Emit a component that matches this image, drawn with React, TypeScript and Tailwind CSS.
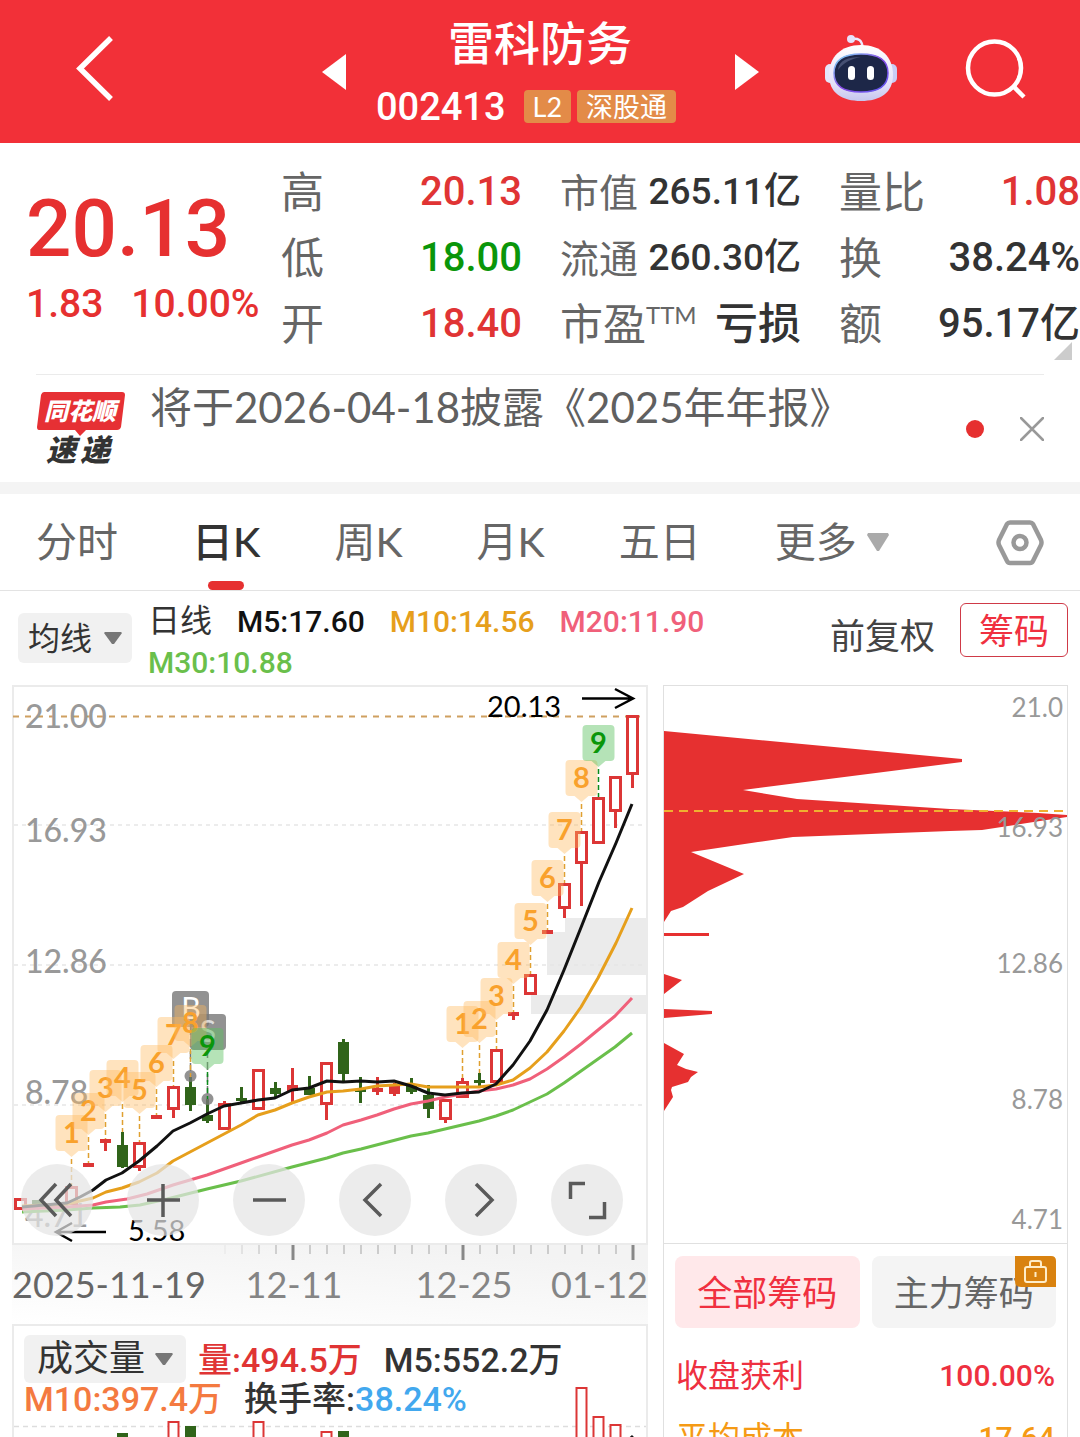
import { ReactNode } from 'react';

const NUM = "font-['Roboto','Noto_Sans_CJK_SC',sans-serif]";

// x of the i-th daily bar
const barX = (i: number) => 20.5 + i * 17;

type Kind = 'up' | 'down' | 'flat';

// [kind, body top, body bottom, high, low]
const CANDLES: [Kind, number, number, number, number][] = [
  ['up', 1198, 1210, 1198, 1210],
  ['down', 1200, 1205, 1200, 1208],
  ['down', 1203, 1207, 1203, 1207],
  ['up', 1186, 1205, 1186, 1205],
  ['flat', 1163, 1167, 1163, 1167],
  ['flat', 1139, 1143, 1139, 1151],
  ['down', 1145, 1167, 1132, 1168],
  ['up', 1142, 1168, 1142, 1171],
  ['flat', 1115, 1119, 1115, 1119],
  ['up', 1086, 1110, 1086, 1118],
  ['down', 1087, 1105, 1077, 1111],
  ['down', 1115, 1121, 1099, 1123],
  ['up', 1103, 1130, 1101, 1130],
  ['down', 1098, 1101, 1087, 1102],
  ['up', 1069, 1110, 1069, 1110],
  ['down', 1088, 1094, 1082, 1097],
  ['flat', 1085, 1091, 1068, 1103],
  ['down', 1088, 1095, 1076, 1095],
  ['up', 1062, 1105, 1062, 1120],
  ['down', 1042, 1074, 1039, 1081],
  ['down', 1089, 1092, 1077, 1103],
  ['flat', 1088, 1092, 1077, 1095],
  ['flat', 1086, 1094, 1083, 1096],
  ['down', 1085, 1092, 1078, 1094],
  ['down', 1095, 1109, 1085, 1118],
  ['up', 1099, 1120, 1099, 1123],
  ['up', 1081, 1098, 1078, 1098],
  ['down', 1080, 1083, 1073, 1086],
  ['up', 1049, 1083, 1049, 1083],
  ['flat', 1012, 1016, 1012, 1020],
  ['up', 974, 995, 974, 995],
  ['flat', 930, 934, 930, 934],
  ['up', 883, 909, 883, 918],
  ['up', 831, 864, 831, 906],
  ['up', 797, 844, 797, 844],
  ['up', 776, 812, 776, 828],
  ['up', 715, 775, 715, 788],
];

const MA_LINES = [
  {
    color: '#6abf4b',
    points:
      '22,1212 67,1210 93,1208 120,1207 140,1205 167,1199 207,1189 241,1181 292,1167 327,1158 343,1153 361,1149 411,1136 428,1133 462,1125 479,1121 496,1116 513,1110 530,1102 547,1094 564,1083 581,1071 598,1059 615,1047 632,1033',
  },
  {
    color: '#f0607a',
    points:
      '22,1209 67,1207 93,1205 106,1202 127,1199 147,1194 173,1185 207,1175 241,1163 258,1157 292,1145 309,1140 327,1133 343,1125 361,1120 377,1115 394,1109 411,1104 428,1101 445,1097 462,1094 479,1091 496,1089 513,1085 530,1079 547,1069 564,1057 581,1044 598,1030 615,1016 632,998',
  },
  {
    color: '#e69f1c',
    points:
      '22,1206 67,1204 93,1198 106,1192 122,1188 139,1182 157,1173 173,1161 190,1152 207,1143 224,1134 241,1125 258,1115 275,1110 292,1103 309,1097 327,1092 343,1091 361,1089 377,1086 394,1085 411,1084 428,1087 462,1087 479,1087 496,1085 513,1080 530,1068 547,1052 564,1031 581,1007 598,978 616,943 632,908',
  },
  {
    color: '#111111',
    points:
      '22,1207 67,1203 80,1197 93,1190 106,1180 122,1173 139,1161 157,1146 173,1131 190,1123 207,1114 224,1106 241,1103 258,1100 275,1098 292,1090 309,1088 327,1081 343,1082 361,1081 377,1082 394,1081 411,1086 428,1093 445,1095 462,1093 479,1092 496,1084 513,1065 530,1041 547,1010 564,970 582,925 599,882 616,843 632,804',
  },
];

// [bar index, label, top of tag]
const TAGS: [number, string, number][] = [
  [3, '1', 1115],
  [4, '2', 1093],
  [5, '3', 1070],
  [6, '4', 1060],
  [7, '5', 1072],
  [8, '6', 1045],
  [9, '7', 1017],
  [10, '8', 1005],
  [11, '9', 1028],
  [26, '1', 1006],
  [27, '2', 1001],
  [28, '3', 978],
  [29, '4', 942],
  [30, '5', 903],
  [31, '6', 860],
  [32, '7', 812],
  [33, '8', 760],
  [34, '9', 725],
];

// [bar index, kind, top of bar]
const VOLUMES: [number, Kind, number][] = [
  [6, 'down', 1433],
  [9, 'up', 1422],
  [10, 'down', 1426],
  [14, 'up', 1422],
  [18, 'up', 1432],
  [19, 'down', 1431],
  [33, 'up', 1388],
  [34, 'up', 1417],
  [35, 'up', 1425],
];

function Header() {
  return (
    <header className="grid h-[143px] grid-cols-[1fr_437px_1fr] items-center bg-[#f23038] text-white">
      <button type="button" aria-label="返回" className="mb-2 ml-[72px] w-12">
        <svg viewBox="72 30 48 76" className="h-[76px] w-12" fill="none">
          <path d="M111 38L80 68.500L111 99" stroke="#fff" strokeWidth="5.500" />
        </svg>
      </button>
      <div className="flex items-center justify-between">
        <button type="button" aria-label="上一只">
          <svg viewBox="0 0 24 36" className="h-9 w-6"><path d="M0 18L24 0V36Z" fill="#fff" /></svg>
        </button>
        <div className="flex flex-col items-center pt-1.5">
          <h1 className="text-[46px] leading-[60px] font-medium">雷科防务</h1>
          <div className="flex items-center gap-1.5 pt-1 pr-7">
            <span className={`${NUM} pr-3 text-[38px] leading-[60px] font-medium`}>002413</span>
            <span className="rounded-sm bg-[#e38b48] px-[9px] text-[27px] leading-[33px]">L2</span>
            <span className="rounded-sm bg-[#e38b48] px-[9px] text-[27px] leading-[33px] whitespace-nowrap">深股通</span>
          </div>
        </div>
        <button type="button" aria-label="下一只">
          <svg viewBox="0 0 24 36" className="h-9 w-6"><path d="M24 18L0 0V36Z" fill="#fff" /></svg>
        </button>
      </div>
      <div className="mb-2 flex items-center justify-end gap-16 pr-[52px]">
        <button type="button" aria-label="智能助手">
          <svg viewBox="824 33 74 70" className="h-[70px] w-[74px]">
            <defs>
              <linearGradient id="shell" x1="0" y1="0" x2="0" y2="1">
                <stop offset="0" stopColor="#fff" />
                <stop offset="0.700" stopColor="#e4e0f8" />
                <stop offset="1" stopColor="#c5c6ee" />
              </linearGradient>
              <linearGradient id="rim" x1="0" y1="0" x2="1" y2="1">
                <stop offset="0" stopColor="#7fe3f5" />
                <stop offset="0.500" stopColor="#8a4be8" />
                <stop offset="1" stopColor="#5e5bf0" />
              </linearGradient>
            </defs>
            <path d="M852 39C858 38 862 40 862.500 47" fill="none" stroke="#eceaff" strokeWidth="2.500" />
            <circle cx="851" cy="39" r="4" fill="#e6e2fb" />
            <rect x="825" y="64" width="10" height="19" rx="5" fill="#e4e6fb" />
            <rect x="887" y="64" width="10" height="19" rx="5" fill="#c9ccf5" />
            <path d="M861 45C881 45 893 57 893 75C893 93 880 101 861 101C842 101 829 93 829 75C829 57 841 45 861 45Z" fill="url(#shell)" />
            <path d="M861 54C878 54 888 59 888 73C888 87 878 92 861 92C844 92 834 87 834 73C834 59 844 54 861 54Z" fill="#1d2748" stroke="url(#rim)" strokeWidth="1.500" />
            <path d="M838 70C839 60 848 57 861 57C851 59 844 62 838 70Z" fill="#465073" />
            <rect x="848" y="66" width="7" height="14" rx="3.500" fill="#fff" />
            <rect x="867" y="66" width="7" height="14" rx="3.500" fill="#fff" />
          </svg>
        </button>
        <button type="button" aria-label="搜索">
          <svg viewBox="962 36 66 68" className="h-[68px] w-[66px]" fill="none" stroke="#fff" strokeWidth="4.500">
            <circle cx="994.500" cy="70" r="26.500" />
            <path d="M1013 88L1024 99" />
          </svg>
        </button>
      </div>
    </header>
  );
}

interface StatProps {
  label: ReactNode;
  tone?: string;
  size?: string;
  labelSize?: string;
  children: ReactNode;
}

function Stat({ label, tone = 'text-[#333]', size = 'text-[40px]', labelSize = 'text-[43px]', children }: StatProps) {
  return (
    <div className="flex h-[66px] items-center justify-between whitespace-nowrap">
      <dt className={`${labelSize} leading-[62px] text-[#666]`}>{label}</dt>
      <dd className={`${NUM} ${size} ${tone} font-medium`}>{children}</dd>
    </div>
  );
}

function Quote() {
  return (
    <section className="relative flex pt-4 pb-[17px]">
      <div className={`${NUM} w-[281px] shrink-0 pt-[22px] pl-[26px] font-medium whitespace-nowrap text-[#e63030]`}>
        <div className="text-[80px] leading-[96px]">20.13</div>
        <div className="flex gap-7 text-[39px] leading-[54px]">
          <span>1.83</span>
          <span>10.00%</span>
        </div>
      </div>
      <dl className="grid flex-1 grid-cols-3 gap-x-[38px]">
        <div>
          <Stat label="高" tone="text-[#e03434]">20.13</Stat>
          <Stat label="低" tone="text-[#0a960a]">18.00</Stat>
          <Stat label="开" tone="text-[#e03434]">18.40</Stat>
        </div>
        <div>
          <Stat label="市值" size="text-[37px]" labelSize="text-[39px]">265.11亿</Stat>
          <Stat label="流通" size="text-[37px]" labelSize="text-[39px]">260.30亿</Stat>
          <Stat label={<>市盈<sup className="-top-4 text-[24px]">TTM</sup></>} size="text-[43px]">亏损</Stat>
        </div>
        <div>
          <Stat label="量比" tone="text-[#e03434]">1.08</Stat>
          <Stat label="换">38.24%</Stat>
          <Stat label="额">95.17亿</Stat>
        </div>
      </dl>
      <svg viewBox="0 0 18 18" className="absolute right-2 bottom-3.5 size-[18px]"><path d="M18 0V18H0Z" fill="#ccc" /></svg>
    </section>
  );
}

function Notice() {
  return (
    <section className="mx-9 flex h-[108px] border-t border-[#ebebeb] text-[#606060]">
      <svg viewBox="36 390 90 90" className="mt-[15px] h-[90px] w-[90px] shrink-0">
        <path d="M44 392H122Q125 392 125 395L121 427Q120 430 117 430H86L80 436L75 430H39Q37 430 37 427L41 395Q42 392 44 392Z" fill="#e63034" />
        <text x="80" y="420" textAnchor="middle" fontSize="24" fontWeight="900" fontStyle="italic" fill="#fff">同花顺</text>
        <g fontSize="30" fontWeight="900" fontStyle="italic" fill="#333">
          <text x="46" y="461">速</text>
          <text x="80" y="461">递</text>
        </g>
      </svg>
      <a href="#notice" className="ml-6 flex-1 pt-1 text-[42px] leading-[56px] whitespace-nowrap">将于2026-04-18披露《2025年年报》</a>
      <div className="flex items-center gap-9">
        <span className="size-[18px] rounded-full bg-[#e63030]" />
        <button type="button" aria-label="关闭">
          <svg viewBox="0 0 24 24" className="size-6" stroke="#999" strokeWidth="2.500" strokeLinecap="round"><path d="M1 1L23 23M23 1L1 23" /></svg>
        </button>
      </div>
    </section>
  );
}

function Tabs() {
  const tabs = ['分时', '日K', '周K', '月K', '五日'];
  return (
    <nav className="flex h-[97px] items-center gap-[74px] border-b border-[#e3e3e3] px-9 text-[41px] whitespace-nowrap text-[#666]">
      {tabs.map(tab => (
        <button
          key={tab}
          type="button"
          className={tab === '日K' ? 'relative h-full font-medium text-[#333]' : 'h-full'}
        >
          {tab}
          {tab === '日K' && <span className="absolute inset-x-0 bottom-0 mx-auto h-[9px] w-9 rounded-full bg-[#e63030]" />}
        </button>
      ))}
      <button type="button" className="flex h-full items-center gap-2.5">
        更多
        <svg viewBox="0 0 22 19" className="h-[19px] w-[22px]"><path d="M1 0H21L22 2L12 18H10L0 2Z" fill="#aaa" /></svg>
      </button>
      <button type="button" aria-label="设置" className="ml-auto">
        <svg viewBox="996 518 48 47" className="h-[47px] w-12" fill="none" stroke="#999" strokeWidth="4.500" strokeLinejoin="round">
          <path d="M1010 521.500H1030Q1032 521.500 1033 523L1041 539Q1042 541.500 1041 544L1033 560Q1032 562 1030 562H1010Q1008 562 1007 560L999 544Q998 541.500 999 539L1007 523Q1008 521.500 1010 521.500Z" />
          <circle cx="1020" cy="541.500" r="6.500" />
        </svg>
      </button>
    </nav>
  );
}

function Caret() {
  return <svg viewBox="0 0 18 13" className="h-[13px] w-[18px]"><path d="M1 0H17L18 1L10 12H8L0 1Z" fill="#777" /></svg>;
}

function IndicatorBar() {
  return (
    <div className="flex h-[94px] items-start pr-3 pl-[18px] whitespace-nowrap">
      <button type="button" className="mt-[22px] flex h-[50px] shrink-0 items-center gap-3 rounded-md bg-[#f1f1f1] px-2.5 text-[32px] text-[#333]">
        均线
        <Caret />
      </button>
      <div className={`${NUM} ml-4 flex flex-1 flex-wrap gap-x-[25px] pt-2.5 text-[30px] leading-[41px] font-medium`}>
        <span className="text-[32px] font-normal text-[#333]">日线</span>
        <span className="text-[#111]">M5:17.60</span>
        <span className="text-[#e69f1c]">M10:14.56</span>
        <span className="text-[#f0607a]">M20:11.90</span>
        <span className="text-[#6abf4b]">M30:10.88</span>
      </div>
      <button type="button" className="mt-[18px] mr-[25px] text-[35px] leading-[52px] text-[#444]">前复权</button>
      <button type="button" className="mt-3 h-[54px] rounded-md border border-[#cf3a48] px-[18px] text-[35px] leading-[52px] text-[#f03040]">筹码</button>
    </div>
  );
}

function Candle({ index }: { index: number }) {
  const [kind, top, bottom, high, low] = CANDLES[index];
  const x = barX(index);
  const color = kind === 'down' ? '#30641a' : '#dc3636';
  return (
    <g>
      <path d={`M${x} ${high}V${top}M${x} ${bottom}V${low}`} stroke={color} strokeWidth="3" />
      {kind === 'up' ? (
        <rect x={x - 5} y={top + 1.5} width="10" height={bottom - top - 3} fill="#fff" stroke={color} strokeWidth="3" />
      ) : (
        <rect x={x - 5.5} y={top} width="11" height={bottom - top} fill={color} />
      )}
    </g>
  );
}

function Tag({ index, label, top }: { index: number; label: string; top: number }) {
  const x = barX(index);
  const green = label === '9';
  return (
    <g>
      <path d={`M${x} ${top + 44}V${CANDLES[index][3]}`} stroke={green ? '#0a8a1a' : '#e0a030'} strokeWidth="1.500" strokeDasharray="5 3" />
      <path
        d={`M${x - 12} ${top}H${x + 12}Q${x + 16} ${top} ${x + 16} ${top + 4}V${top + 32}Q${x + 16} ${top + 36} ${x + 12} ${top + 36}H${x + 7}L${x} ${top + 42}L${x - 7} ${top + 36}H${x - 12}Q${x - 16} ${top + 36} ${x - 16} ${top + 32}V${top + 4}Q${x - 16} ${top} ${x - 12} ${top}Z`}
        fill={green ? '#5cc060' : '#ffb85c'}
        fillOpacity={green ? 0.45 : 0.4}
      />
      <text x={x} y={top + 28} textAnchor="middle" fontSize="29" fontWeight="700" fill={green ? '#0a960a' : '#f9a12c'}>{label}</text>
    </g>
  );
}

function KLineChart() {
  return (
    <svg viewBox="12 685 636 639" className="block h-auto w-full" fill="none">
      <defs>
        <linearGradient id="axis" x1="0" y1="1" x2="0.600" y2="0">
          <stop offset="0" stopColor="#fff" />
          <stop offset="1" stopColor="#f3f3f3" />
        </linearGradient>
      </defs>
      <rect x="12" y="1245" width="636" height="79" fill="url(#axis)" />
      <rect x="13" y="686" width="634" height="558" fill="#fff" stroke="#ebebeb" strokeWidth="2" />
      <path d="M547 932H565V918H647V975H547ZM531 995H647V1014H531Z" fill="#ebebeb" />
      <path d="M14 825H646M14 965H646M14 1105H646" stroke="#e6e6e6" strokeWidth="1.500" strokeDasharray="4 4" />
      <path d="M13 716.500H640" stroke="#cfa060" strokeWidth="2" strokeDasharray="6 6" />
      <g fontSize="32" fill="#999" fontWeight="500">
        <text x="25" y="728">21.00</text>
        <text x="25" y="842">16.93</text>
        <text x="25" y="973">12.86</text>
        <text x="25" y="1104">8.78</text>
        <text x="25" y="1227">4.71</text>
      </g>

      {CANDLES.map((_, i) => <Candle key={i} index={i} />)}
      {MA_LINES.map(line => (
        <polyline key={line.color} points={line.points} stroke={line.color} strokeWidth="3" strokeLinejoin="round" />
      ))}

      <path d="M190.500 1027V1076M207.500 1050V1099" stroke="#777" strokeWidth="1.500" strokeDasharray="8 4" />
      <g fill="#777" fillOpacity="0.800">
        <rect x="172" y="991" width="37" height="36" rx="4" />
        <rect x="190" y="1014" width="36" height="36" rx="4" />
        <circle cx="190.500" cy="1076" r="6" />
        <circle cx="207.500" cy="1099" r="6" />
      </g>
      <g fontSize="30" fill="#fff" textAnchor="middle">
        <text x="191" y="1019">B</text>
        <text x="208" y="1042" fillOpacity="0.700">S</text>
      </g>
      {TAGS.map(([index, label, top]) => <Tag key={index} index={index} label={label} top={top} />)}

      <g fontSize="29" fill="#000">
        <text x="487" y="717">20.13</text>
        <text x="128" y="1241">5.58</text>
      </g>
      <path d="M582 698.500H632M615 689L633 698.500L615 708M106 1232H56M72 1223L56 1232L72 1241" stroke="#000" strokeWidth="2.500" />

      {Array.from({ length: 25 }, (_, i) => {
        const major = i % 10 === 4;
        return (
          <path
            key={i}
            d={major ? `M${225 + i * 17} 1245V1260` : `M${225 + i * 17} 1245V1254`}
            stroke={major ? '#888' : '#ccc'}
            strokeWidth={major ? 3 : 2}
            strokeOpacity={Math.min(1, 0.2 + i * 0.25)}
          />
        );
      })}
      <g fontSize="36" fill="#858585">
        <text x="12" y="1298" fill="#666">2025-11-19</text>
        <text x="294" y="1298" textAnchor="middle">12-11</text>
        <text x="464" y="1298" textAnchor="middle">12-25</text>
        <text x="648" y="1298" textAnchor="end">01-12</text>
      </g>
    </svg>
  );
}

const CONTROLS = [
  { name: '最早', d: 'M35 20L20 36L35 52M50 20L35 36L50 52' },
  { name: '放大', d: 'M20 36H53M36 20V53' },
  { name: '缩小', d: 'M20 36H53' },
  { name: '向左', d: 'M42 20L26 36L42 52' },
  { name: '向右', d: 'M31 20L47 36L31 52' },
  { name: '全屏', d: 'M19.500 35V19.500H34M38 53.500H53.500V38' },
];

function ChartControls() {
  return (
    <div className="absolute inset-x-0 top-[479px] flex justify-between pr-[25px] pl-[9px]">
      {CONTROLS.map(control => (
        <button key={control.name} type="button" aria-label={control.name} className="size-[72px] rounded-full bg-[#e5e5e5]/72">
          <svg viewBox="0 0 72 72" className="size-full" fill="none" stroke="#5a5a5a" strokeWidth="3.500"><path d={control.d} /></svg>
        </button>
      ))}
    </div>
  );
}

function VolumePanel() {
  return (
    <div className="relative h-[200px] border-2 border-[#ebebeb]">
      <svg viewBox="14 1326 632 196" className="absolute inset-x-0 top-0 w-full" fill="none">
        <path d="M14 1426.500H646" stroke="#ddd" strokeWidth="1.500" strokeDasharray="5 4" />
        {VOLUMES.map(([index, kind, top]) =>
          kind === 'up' ? (
            <rect key={index} x={barX(index) - 5} y={top} width="10" height="110" fill="#fff" stroke="#dc3636" strokeWidth="2" />
          ) : (
            <rect key={index} x={barX(index) - 5.5} y={top} width="11" height="110" fill="#30641a" />
          ),
        )}
        <path d="M616 1452L633 1436" stroke="#111" strokeWidth="3" />
      </svg>
      <div className={`${NUM} relative flex flex-wrap gap-x-[22px] pt-[9px] pl-2.5 text-[34px] leading-10 font-medium whitespace-nowrap text-[#333]`}>
        <div className="flex gap-3">
          <button type="button" className="flex h-12 items-center gap-2.5 rounded-md bg-[#f1f1f1] px-[13px] text-[36px] leading-[52px] font-normal">
            成交量
            <Caret />
          </button>
          <span className="leading-[50px] text-[#e03434]">量:494.5万</span>
        </div>
        <span className="leading-[50px]">M5:552.2万</span>
        <div className="-mt-1.5 flex w-full gap-[22px]">
          <span className="text-[#f47a40]">M10:397.4万</span>
          <span>换手率:<span className="text-[#42a8ee]">38.24%</span></span>
        </div>
      </div>
    </div>
  );
}

function ChipPanel() {
  return (
    <aside className="h-[900px] border border-[#e0e0e0]">
      <svg viewBox="664 686 403 557" className="block h-auto w-full border-b border-[#e0e0e0]">
        <g fill="#e63030">
          <path d="M664 731L962 759V762L743 790L797 799L950 809L1038 813L1067 815V817L1040 821L982 830L950 831L793 837L758 842L691 852L744 874L708 891L683 907L671 911L664 922Z" />
          <rect x="664" y="933" width="45" height="3" />
          <path d="M664 974L682 980L664 994ZM664 1009L712 1011V1014L664 1018Z" />
          <path d="M664 1043L684 1054L677 1065L686 1069L698 1072L691 1077L688 1082L672 1087L671 1090L673 1097L664 1111Z" />
        </g>
        <path d="M664 811H1067" stroke="#f0b030" strokeWidth="2" strokeDasharray="9 6" />
        <g fontSize="26" fill="#999" textAnchor="end">
          <text x="1063" y="717">21.0</text>
          <text x="1063" y="837">16.93</text>
          <text x="1063" y="973">12.86</text>
          <text x="1063" y="1109">8.78</text>
          <text x="1063" y="1229">4.71</text>
        </g>
      </svg>
      <div className="flex gap-3 px-[11px] pt-3 text-[35px] leading-[72px] whitespace-nowrap">
        <button type="button" className="flex-1 rounded-lg bg-[#ffe8ea] text-[#f03040]">全部筹码</button>
        <button type="button" className="relative flex-1 rounded-lg bg-[#f4f4f4] text-[#666]">
          主力筹码
          <svg viewBox="0 0 41 31" className="absolute top-0 right-0 h-[31px] w-[41px]" fill="none" stroke="#ffedc8" strokeWidth="2">
            <path d="M0 0H36Q41 0 41 5V31H6Q0 31 0 25Z" fill="#d9820f" stroke="none" />
            <rect x="10" y="11" width="21" height="15" rx="2" />
            <path d="M15 11V7Q15 5 17 5H24Q26 5 26 7V11M20.500 16V21" />
          </svg>
        </button>
      </div>
      <dl className={`${NUM} px-3 pt-[17px] text-[30px] leading-[62px]`}>
        <div className="flex justify-between text-[#ee3040]">
          <dt className="text-[32px]">收盘获利</dt>
          <dd className="font-medium">100.00%</dd>
        </div>
        <div className="flex justify-between text-[#f59a14]">
          <dt className="text-[32px]">平均成本</dt>
          <dd className="font-medium">17.64</dd>
        </div>
      </dl>
    </aside>
  );
}

export default function App() {
  return (
    <div className="h-screen overflow-hidden bg-white font-['Lato','Noto_Sans_CJK_SC',sans-serif]">
      <Header />
      <Quote />
      <Notice />
      <div className="h-3 bg-[#f4f4f4]" />
      <Tabs />
      <IndicatorBar />
      <main className="grid grid-cols-[636fr_405fr] gap-[15px] px-3">
        <div className="relative">
          <KLineChart />
          <ChartControls />
          <VolumePanel />
        </div>
        <ChipPanel />
      </main>
    </div>
  );
}
